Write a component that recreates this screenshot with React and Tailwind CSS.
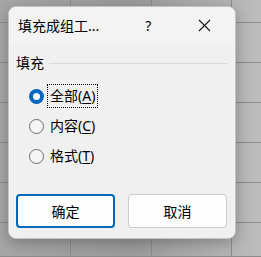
import React from 'react';

const font = { fontFamily: '"Noto Sans", "Noto Sans CJK SC", sans-serif' };

function Radio({ checked, label, keyChar, focused }) {
  return (
    <div className="flex items-center h-[30px]">
      {checked ? (
        <span className="w-[15px] h-[15px] rounded-full bg-[#0067c0] flex items-center justify-center shrink-0">
          <span className="w-[7px] h-[7px] rounded-full bg-white" />
        </span>
      ) : (
        <span className="w-[15px] h-[15px] rounded-full border border-[#6b6b6b] bg-[#f5f5f5] shrink-0" />
      )}
      <span
        className={`ml-[4px] px-[2px] h-[22px] flex items-center text-[14px] text-black leading-none ${
          focused ? 'outline outline-1 outline-dotted outline-black' : ''
        }`}
      >
        {label}(<span className="underline underline-offset-2">{keyChar}</span>)
      </span>
    </div>
  );
}

export default function App() {
  const rows = [23, 40, 40, 40, 40, 40, 34];
  return (
    <div className="relative w-[261px] h-[257px] overflow-hidden bg-[linear-gradient(90deg,#a6a6a6_0%,#9a9a9a_50%,#bcbcbc_100%)]" style={font}>
      {/* spreadsheet grid behind the dialog */}
      <div className="flex flex-col">
        {rows.map((h, i) => (
          <div key={i} className="flex border-b border-[#8c8c8c]" style={{ height: h }}>
            <div className="w-[71px] border-r border-[#8c8c8c]" />
            <div className="w-[81px] border-r border-[#8c8c8c]" />
            <div className="w-[80px] border-r border-[#8c8c8c]" />
          </div>
        ))}
      </div>

      {/* dialog */}
      <div className="absolute left-[8px] top-[6px] w-[228px] h-[233px] rounded-[8px] bg-[#f0f0f0] border border-[#c4c4c4] shadow-[0_4px_14px_rgba(0,0,0,0.25)] overflow-hidden flex flex-col">
        <div className="h-[37px] bg-[#f3f3f3] flex items-center shrink-0">
          <span className="ml-[9px] text-[14px] text-black leading-none">填充成组工...</span>
          <span className="ml-[46px] text-[14px] text-black leading-none">?</span>
          <svg className="ml-[47px]" width="13" height="13" viewBox="0 0 13 13">
            <path d="M1 1 L12 12 M12 1 L1 12" stroke="#1a1a1a" strokeWidth="1.1" fill="none" />
          </svg>
        </div>

        <div className="px-[7px] pt-[12px] flex flex-col">
          <div className="flex items-center">
            <span className="text-[14px] text-black leading-none">填充</span>
            <span className="flex-1 ml-[5px] h-px bg-[#d9d9d9]" />
          </div>
          <div className="pl-[13px] pt-[11px] flex flex-col">
            <Radio checked focused label="全部" keyChar="A" />
            <Radio label="内容" keyChar="C" />
            <Radio label="格式" keyChar="T" />
          </div>
        </div>

        <div className="mt-auto mb-[10px] px-[7px] flex gap-[13px]">
          <button className="w-[99px] h-[34px] rounded-[4px] bg-[#fdfdfd] border-2 border-[#0067c0] text-[14px] text-black">
            确定
          </button>
          <button className="w-[99px] h-[34px] rounded-[4px] bg-[#fdfdfd] border border-[#cccccc] text-[14px] text-black">
            取消
          </button>
        </div>
      </div>
    </div>
  );
}
